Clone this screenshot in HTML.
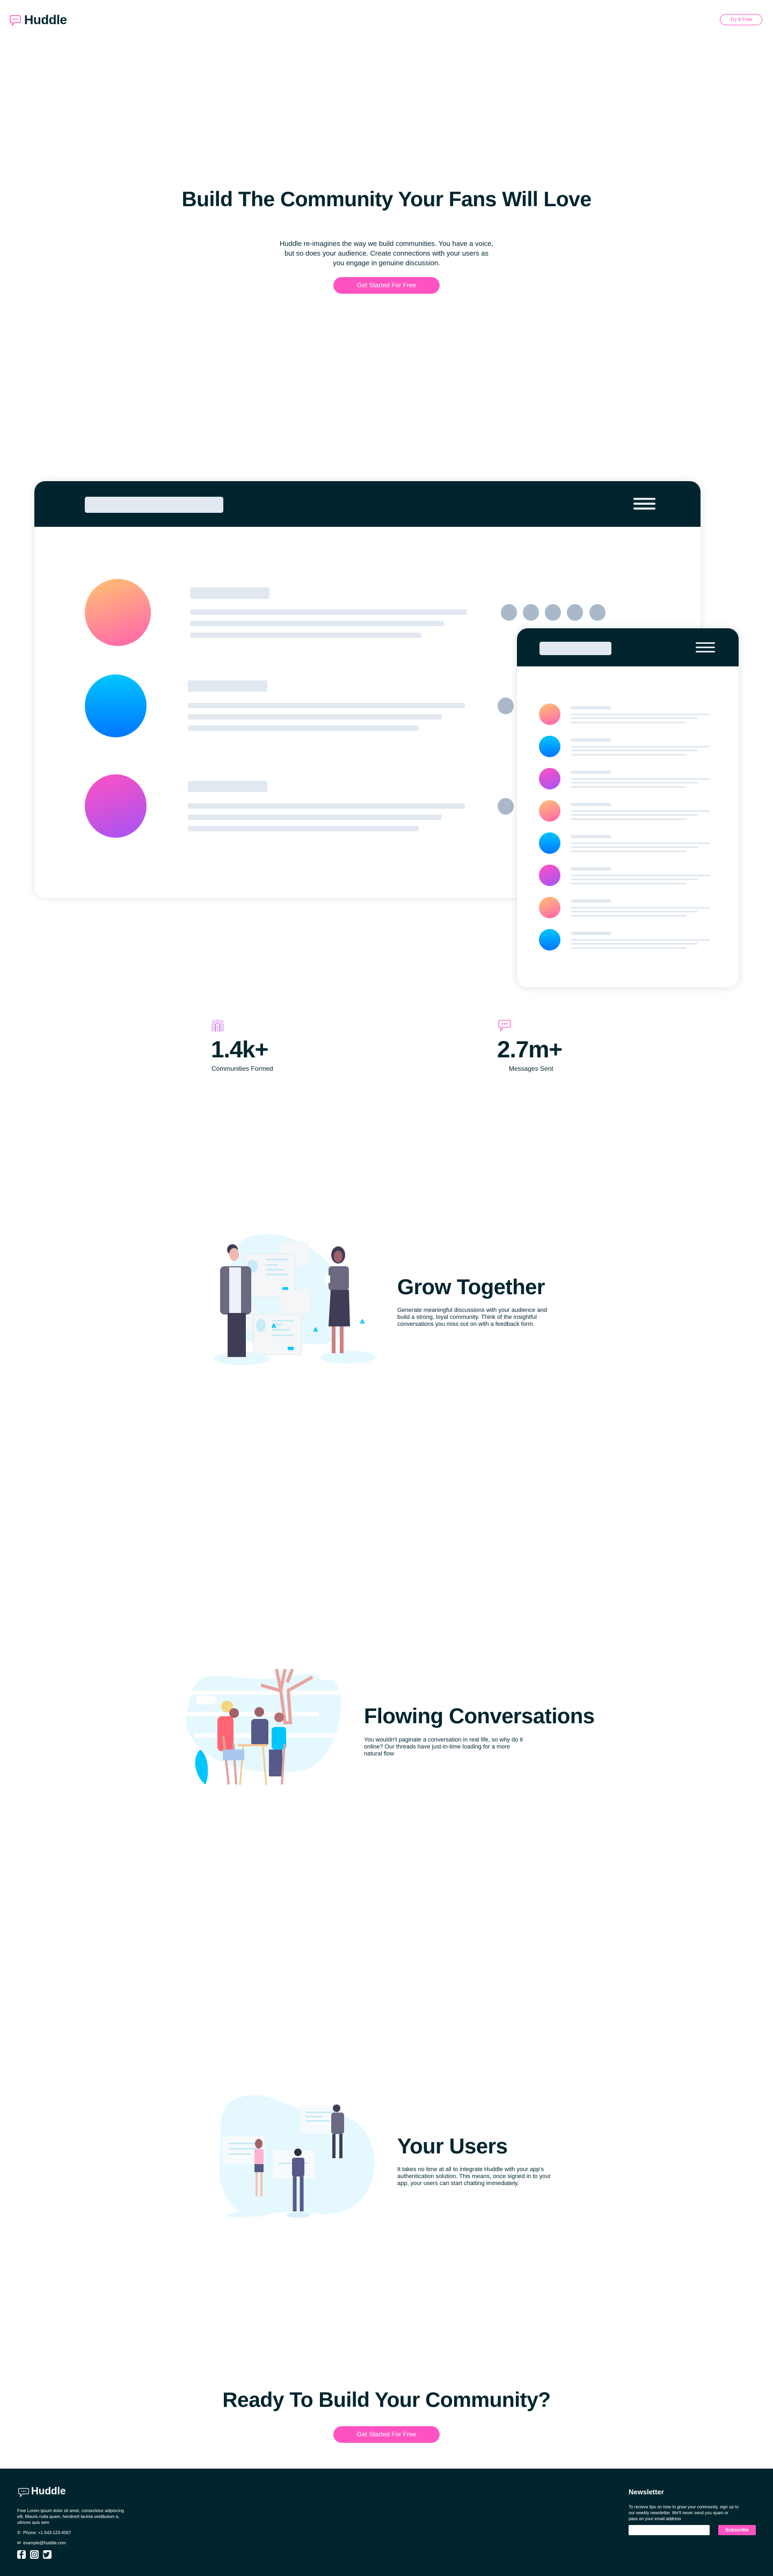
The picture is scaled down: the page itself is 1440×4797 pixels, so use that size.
<!DOCTYPE html>
<html><head><meta charset="utf-8">
<style>
*{margin:0;padding:0;box-sizing:border-box}
body{width:1440px;height:4797px;position:relative;background:#fff;font-family:"Liberation Sans",sans-serif;color:#00252e;overflow:hidden}
.a{position:absolute}
.h{font-weight:bold;color:#00252e;letter-spacing:-0.5px}
.btn{position:absolute;background:#ff52c1;color:#fff;border-radius:16px;font-size:12px;text-align:center}
.bar{position:absolute;background:#e1e8ef;border-radius:3px}
.dot{position:absolute;width:30px;height:31px;border-radius:50%;background:#a9b9c9}
.c1{background:linear-gradient(160deg,#ffc371,#ff70a6 85%)}
.c2{background:linear-gradient(180deg,#00c6ff,#0076ff)}
.c3{background:linear-gradient(160deg,#ff52c1,#a553f5)}
.p{font-size:11px;line-height:13px;color:#00252e}
</style></head><body>

<svg class="a" style="left:18px;top:27px" width="22" height="22" viewBox="0 0 22 22"><path d="M3 2h15a2 2 0 0 1 2 2v9a2 2 0 0 1-2 2H9l-4 5v-5H3a2 2 0 0 1-2-2V4a2 2 0 0 1 2-2z" fill="none" stroke="#ff52c1" stroke-width="1.5"/><circle cx="7" cy="8.5" r="1.2" fill="#ff52c1"/><circle cx="10.5" cy="8.5" r="1.2" fill="#ff52c1"/><circle cx="14" cy="8.5" r="1.2" fill="#ff52c1"/></svg>
<div class="a h" style="left:45px;top:24px;font-size:24px;letter-spacing:-0.3px">Huddle</div>
<div class="a" style="left:1341px;top:26px;width:79px;height:21px;border:1px solid #ff52c1;border-radius:11px;color:#ff52c1;font-size:9px;text-align:center;line-height:19px">Try It Free</div>

<div class="a h" style="left:0;width:1440px;top:350px;text-align:center;font-size:39px">Build The Community Your Fans Will Love</div>
<div class="a" style="left:520px;width:400px;top:445px;text-align:center;font-size:13px;line-height:18px">Huddle re-imagines the way we build communities. You have a voice, but so does your audience. Create connections with your users as you engage in genuine discussion.</div>
<div class="btn" style="left:621px;top:516px;width:198px;height:31px;line-height:31px">Get Started For Free</div>

<div class="a" style="left:64px;top:896px;width:1241px;height:776px;border-radius:20px;background:#fff;box-shadow:0 0 14px rgba(0,37,46,0.12);overflow:hidden">
  <div class="a" style="left:0;top:0;width:1241px;height:85px;background:#00252e"></div>
  <div class="bar" style="left:94px;top:29px;width:258px;height:30px;border-radius:4px"></div>
  <div class="bar" style="left:1116px;top:31px;width:41px;height:4px"></div>
  <div class="bar" style="left:1116px;top:40px;width:41px;height:4px"></div>
  <div class="bar" style="left:1116px;top:49px;width:41px;height:4px"></div>
</div>
<div class="a c1" style="left:158px;top:1078px;width:123px;height:125px;border-radius:50%"></div>
<div class="a c2" style="left:158px;top:1256px;width:115px;height:117px;border-radius:50%"></div>
<div class="a c3" style="left:158px;top:1442px;width:115px;height:118px;border-radius:50%"></div>
<div class="bar" style="left:354px;top:1094px;width:148px;height:21px"></div>
<div class="bar" style="left:354px;top:1135px;width:516px;height:10px"></div>
<div class="bar" style="left:354px;top:1156px;width:473px;height:10px"></div>
<div class="bar" style="left:354px;top:1178px;width:431px;height:10px"></div>
<div class="bar" style="left:350px;top:1267px;width:148px;height:21px"></div>
<div class="bar" style="left:350px;top:1309px;width:516px;height:10px"></div>
<div class="bar" style="left:350px;top:1330px;width:473px;height:10px"></div>
<div class="bar" style="left:350px;top:1351px;width:430px;height:10px"></div>
<div class="bar" style="left:350px;top:1454px;width:148px;height:21px"></div>
<div class="bar" style="left:350px;top:1496px;width:516px;height:10px"></div>
<div class="bar" style="left:350px;top:1517px;width:473px;height:10px"></div>
<div class="bar" style="left:350px;top:1538px;width:430px;height:10px"></div>
<div class="dot" style="left:933px;top:1125px"></div>
<div class="dot" style="left:974px;top:1125px"></div>
<div class="dot" style="left:1015px;top:1125px"></div>
<div class="dot" style="left:1056px;top:1125px"></div>
<div class="dot" style="left:1098px;top:1125px"></div>
<div class="dot" style="left:927px;top:1299px"></div>
<div class="dot" style="left:927px;top:1486px"></div>

<div class="a" style="left:963px;top:1170px;width:413px;height:669px;border-radius:20px;background:#fff;box-shadow:0 0 14px rgba(0,37,46,0.14);overflow:hidden">
  <div class="a" style="left:0;top:0;width:413px;height:71px;background:#00252e"></div>
  <div class="bar" style="left:42px;top:25px;width:134px;height:25px;border-radius:4px"></div>
  <div class="bar" style="left:333px;top:26px;width:36px;height:3px"></div>
  <div class="bar" style="left:333px;top:34px;width:36px;height:3px"></div>
  <div class="bar" style="left:333px;top:42px;width:36px;height:3px"></div>
</div>
<div class="a c1" style="left:1004px;top:1310px;width:40px;height:40px;border-radius:50%"></div>
<div class="a c2" style="left:1004px;top:1370px;width:40px;height:40px;border-radius:50%"></div>
<div class="a c3" style="left:1004px;top:1430px;width:40px;height:40px;border-radius:50%"></div>
<div class="a c1" style="left:1004px;top:1490px;width:40px;height:40px;border-radius:50%"></div>
<div class="a c2" style="left:1004px;top:1550px;width:40px;height:40px;border-radius:50%"></div>
<div class="a c3" style="left:1004px;top:1610px;width:40px;height:40px;border-radius:50%"></div>
<div class="a c1" style="left:1004px;top:1670px;width:40px;height:40px;border-radius:50%"></div>
<div class="a c2" style="left:1004px;top:1730px;width:40px;height:40px;border-radius:50%"></div>
<svg class="a" style="left:1064px;top:1300px" width="270" height="480">
<g fill="#e1e8ef">
<rect x="0" y="15" width="74" height="6"/><rect x="0" y="29" width="258" height="3"/><rect x="0" y="36" width="236" height="3"/><rect x="0" y="44" width="215" height="3"/>
<rect x="0" y="75" width="74" height="6"/><rect x="0" y="89" width="258" height="3"/><rect x="0" y="96" width="236" height="3"/><rect x="0" y="104" width="215" height="3"/>
<rect x="0" y="135" width="74" height="6"/><rect x="0" y="149" width="258" height="3"/><rect x="0" y="156" width="236" height="3"/><rect x="0" y="164" width="215" height="3"/>
<rect x="0" y="195" width="74" height="6"/><rect x="0" y="209" width="258" height="3"/><rect x="0" y="216" width="236" height="3"/><rect x="0" y="224" width="215" height="3"/>
<rect x="0" y="255" width="74" height="6"/><rect x="0" y="269" width="258" height="3"/><rect x="0" y="276" width="236" height="3"/><rect x="0" y="284" width="215" height="3"/>
<rect x="0" y="315" width="74" height="6"/><rect x="0" y="329" width="258" height="3"/><rect x="0" y="336" width="236" height="3"/><rect x="0" y="344" width="215" height="3"/>
<rect x="0" y="375" width="74" height="6"/><rect x="0" y="389" width="258" height="3"/><rect x="0" y="396" width="236" height="3"/><rect x="0" y="404" width="215" height="3"/>
<rect x="0" y="435" width="74" height="6"/><rect x="0" y="449" width="258" height="3"/><rect x="0" y="456" width="236" height="3"/><rect x="0" y="464" width="215" height="3"/>
</g></svg>

<svg class="a" style="left:394px;top:1899px" width="23" height="22" viewBox="0 0 23 22" fill="none" stroke="#c56ef0" stroke-width="1"><circle cx="4" cy="4" r="2.5"/><circle cx="11.5" cy="3" r="2.5"/><circle cx="19" cy="4" r="2.5"/><path d="M1 22V9h6v13M8 22V7h7v15M16 22V9h6v13M4 12v10M11.5 10v12M19 12v10"/></svg>
<div class="a h" style="left:393px;top:1930px;font-size:44px;letter-spacing:-1px">1.4k+</div>
<div class="a" style="left:394px;top:1983px;font-size:12px">Communities Formed</div>
<svg class="a" style="left:928px;top:1899px" width="24" height="22" viewBox="0 0 24 22"><path d="M3 1h18a2 2 0 0 1 2 2v9a2 2 0 0 1-2 2H9l-4 6v-6H3a2 2 0 0 1-2-2V3a2 2 0 0 1 2-2z" fill="none" stroke="#ff52c1" stroke-width="1.3"/><circle cx="8" cy="7.5" r="1.3" fill="#ff52c1"/><circle cx="12" cy="7.5" r="1.3" fill="#ff52c1"/><circle cx="16" cy="7.5" r="1.3" fill="#ff52c1"/></svg>
<div class="a h" style="left:926px;top:1930px;font-size:44px;letter-spacing:-1px">2.7m+</div>
<div class="a" style="left:948px;top:1983px;font-size:12px">Messages Sent</div>

<svg class="a" style="left:400px;top:2290px" width="300" height="255" viewBox="0 0 300 255">
<path d="M60 15C110-5 170 20 210 60s50 110 20 140-100 0-130 5-80 10-75-40S20 30 60 15z" fill="#e5f8fd"/>
<rect x="120" y="22" width="55" height="45" fill="#f4f6f8"/>
<rect x="56" y="45" width="93" height="80" fill="#f4f6f8" stroke="#e1e8ef"/><ellipse cx="70" cy="68" rx="10" ry="12" fill="#c7ebf7"/><rect x="95" y="54" width="42" height="3" fill="#c7ebf7"/><rect x="95" y="64" width="22" height="3" fill="#c7ebf7"/><rect x="95" y="73" width="35" height="3" fill="#c7ebf7"/><rect x="95" y="82" width="42" height="3" fill="#c7ebf7"/><rect x="126" y="107" width="11" height="6" fill="#00c6ff"/>
<rect x="122" y="112" width="56" height="45" fill="#f4f6f8"/>
<rect x="24" y="144" width="56" height="45" fill="#f4f6f8"/>
<rect x="72" y="157" width="90" height="76" fill="#f4f6f8" stroke="#e1e8ef"/><ellipse cx="86" cy="178" rx="9" ry="12" fill="#c7ebf7"/><rect x="107" y="168" width="40" height="3" fill="#c7ebf7"/><rect x="107" y="175" width="20" height="3" fill="#c7ebf7"/><rect x="107" y="185" width="33" height="3" fill="#c7ebf7"/><rect x="107" y="195" width="40" height="3" fill="#c7ebf7"/><rect x="136" y="218" width="11" height="6" fill="#00c6ff"/>
<ellipse cx="50" cy="240" rx="52" ry="12" fill="#e5f8fd"/><ellipse cx="248" cy="237" rx="52" ry="12" fill="#e5f8fd"/>
<circle cx="33" cy="37" r="10" fill="#3f3d56"/>
<rect x="10" y="68" width="58" height="90" rx="8" fill="#6b6a81"/><rect x="27" y="70" width="22" height="88" fill="#eef1f6"/>
<rect x="24" y="155" width="34" height="82" fill="#3f3d56"/>
<ellipse cx="36" cy="46" rx="9" ry="12" fill="#f2b8b0"/>
<ellipse cx="230" cy="47" rx="13" ry="16" fill="#3f3d56"/><ellipse cx="230" cy="50" rx="8" ry="11" fill="#a0616a"/>
<rect x="212" y="68" width="38" height="45" rx="6" fill="#6b6a81"/>
<path d="M216 112h34l2 68h-40z" fill="#3f3d56"/><rect x="218" y="180" width="7" height="50" fill="#d08080"/><rect x="233" y="180" width="7" height="50" fill="#d08080"/>
<rect x="205" y="85" width="10" height="14" fill="#fff"/>
<path d="M107 183l3-6 3 6M185 190l3-6 3 6M272 175l3-6 3 6" stroke="#00c6ff" stroke-width="3" fill="none"/>
</svg>
<div class="a h" style="left:740px;top:2375px;font-size:40px">Grow Together</div>
<div class="a p" style="left:740px;top:2434px;width:305px">Generate meaningful discussions with your audience and build a strong, loyal community. Think of the insightful conversations you miss out on with a feedback form.</div>

<svg class="a" style="left:343px;top:3108px" width="295" height="218" viewBox="0 0 295 218">
<path d="M40 15c40-10 80 12 140 0s110-8 112 40-15 100-50 125-140 10-180-10S-5 110 5 80 10 25 40 15z" fill="#e5f8fd"/>
<rect x="10" y="40" width="280" height="8" fill="#fff"/><rect x="0" y="80" width="250" height="8" fill="#fff"/><rect x="20" y="120" width="270" height="8" fill="#fff"/>
<rect x="22" y="50" width="38" height="16" rx="7" fill="#fff"/><rect x="250" y="5" width="30" height="15" rx="7" fill="#fff"/>
<path d="M172 0l8 40 8-40M180 40l8 60h10l-4-60 45-25M178 40l-35-10M192 25l10-25" stroke="#e8a4a0" stroke-width="6" fill="none"/>
<path d="M30 150c15 10 18 45 10 65-14-8-30-45-10-65z" fill="#00c6ff"/>
<circle cx="80" cy="70" r="11" fill="#f5d580"/><rect x="62" y="88" width="30" height="65" rx="8" fill="#ff6574"/>
<circle cx="93" cy="82" r="9" fill="#a0616a"/>
<circle cx="140" cy="80" r="9" fill="#a0616a"/><rect x="125" y="93" width="32" height="50" rx="6" fill="#575a89"/>
<circle cx="177" cy="90" r="9" fill="#b07070"/><rect x="163" y="108" width="27" height="42" rx="6" fill="#00c6ff"/><rect x="158" y="150" width="25" height="50" fill="#575a89"/>
<rect x="100" y="140" width="55" height="4" fill="#f7c891"/><path d="M110 144l-6 72M147 144l6 72" stroke="#f7c891" stroke-width="3"/>
<path d="M73 125l10 90M92 140l5 75M187 140l-5 75" stroke="#dba3a0" stroke-width="4"/>
<rect x="72" y="150" width="40" height="20" fill="#a8c8ee"/>
</svg>
<div class="a h" style="left:678px;top:3174px;font-size:40px">Flowing Conversations</div>
<div class="a p" style="left:678px;top:3234px;width:300px">You wouldn't paginate a conversation in real life, so why do it online? Our threads have just-in-time loading for a more natural flow</div>

<svg class="a" style="left:399px;top:3900px" width="302" height="232" viewBox="0 0 302 232">
<path d="M50 5c50-15 80 20 130 25s100 10 115 70-20 110-60 120-100-10-140 5S5 200 10 130 0 20 50 5z" fill="#e5f8fd"/>
<rect x="16" y="78" width="78" height="52" rx="3" fill="#f7fafc"/><rect x="27" y="90" width="55" height="3" fill="#c7ebf7"/><rect x="27" y="100" width="55" height="3" fill="#c7ebf7"/><rect x="27" y="110" width="40" height="3" fill="#c7ebf7"/>
<rect x="161" y="20" width="74" height="52" rx="3" fill="#f7fafc"/><rect x="170" y="32" width="52" height="3" fill="#c7ebf7"/><rect x="170" y="40" width="32" height="3" fill="#c7ebf7"/><rect x="170" y="48" width="45" height="3" fill="#c7ebf7"/>
<rect x="110" y="105" width="78" height="52" rx="3" fill="#f7fafc"/><rect x="120" y="127" width="55" height="3" fill="#c7ebf7"/>
<ellipse cx="83" cy="92" rx="7" ry="9" fill="#a0616a"/><rect x="75" y="102" width="17" height="30" fill="#ffb3d1"/><rect x="75" y="130" width="17" height="15" fill="#575a89"/><path d="M79 145v45M88 145v45" stroke="#f4c2b0" stroke-width="4"/>
<circle cx="228" cy="26" r="7" fill="#3f3d56"/><rect x="218" y="34" width="24" height="40" rx="5" fill="#6b6a81"/><path d="M223 74v45M236 74v45" stroke="#3f3d56" stroke-width="6"/>
<circle cx="156" cy="108" r="7" fill="#2f2e41"/><rect x="145" y="118" width="23" height="35" rx="4" fill="#575a89"/><path d="M150 153v65M163 153v65" stroke="#575a89" stroke-width="7"/>
<ellipse cx="45" cy="225" rx="20" ry="5" fill="#e5f8fd"/><ellipse cx="157" cy="225" rx="22" ry="5" fill="#d7f1fb"/>
</svg>
<div class="a h" style="left:740px;top:3975px;font-size:40px">Your Users</div>
<div class="a p" style="left:740px;top:4034px;width:300px">It takes no time at all to integrate Huddle with your app's authentication solution. This means, once signed in to your app, your users can start chatting immediately.</div>

<div class="a h" style="left:0;width:1440px;top:4448px;text-align:center;font-size:39px">Ready To Build Your Community?</div>
<div class="btn" style="left:621px;top:4518px;width:198px;height:31px;line-height:31px">Get Started For Free</div>

<div class="a" style="left:0;top:4597px;width:1440px;height:200px;background:#00252e;color:#fff">
  <svg class="a" style="left:34px;top:36px" width="20" height="17" viewBox="0 0 20 17"><path d="M2 1h16a1.5 1.5 0 0 1 1.5 1.5v7A1.5 1.5 0 0 1 18 11H8l-4 5v-5H2A1.5 1.5 0 0 1 .5 9.5v-7A1.5 1.5 0 0 1 2 1z" fill="none" stroke="#fff" stroke-width="1.2"/><circle cx="6.5" cy="6" r="1" fill="#fff"/><circle cx="10" cy="6" r="1" fill="#fff"/><circle cx="13.5" cy="6" r="1" fill="#fff"/></svg>
  <div class="a" style="left:58px;top:32px;font-size:19px;font-weight:bold">Huddle</div>
  <div class="a" style="left:32px;top:73px;width:200px;font-size:8px;line-height:11px">Free Lorem ipsum dolor sit amet, consectetur adipiscing elit. Mauris nulla quam, hendrerit lacinia vestibulum a, ultrices quis sem</div>
  <div class="a" style="left:32px;top:115px;font-size:8px">✆ &nbsp;Phone: +1-543-123-4567</div>
  <div class="a" style="left:32px;top:134px;font-size:8px">✉ &nbsp;example@huddle.com</div>
  <svg class="a" style="left:32px;top:152px" width="65" height="16" viewBox="0 0 65 16"><rect x="0" y="0" width="16" height="16" rx="3" fill="#fff"/><path d="M9 16V9h2.3l.4-2.6H9V5c0-.8.3-1.3 1.3-1.3h1.4V1.4C11.4 1.3 10.6 1.2 9.8 1.2 7.9 1.2 6.5 2.4 6.5 4.6v1.8H4.3V9h2.2v7z" fill="#00252e"/><rect x="24" y="0" width="16" height="16" rx="3" fill="#fff"/><rect x="26.5" y="2.5" width="11" height="11" rx="3" fill="none" stroke="#00252e" stroke-width="1.3"/><circle cx="32" cy="8" r="2.6" fill="none" stroke="#00252e" stroke-width="1.3"/><rect x="48" y="0" width="16" height="16" rx="3" fill="#fff"/><path d="M61 4.5c-.5.2-1 .4-1.5.4.6-.3 1-.9 1.2-1.5-.5.3-1.1.5-1.7.7a2.6 2.6 0 0 0-4.5 2.4c-2.2-.1-4.1-1.2-5.4-2.8-.7 1.2-.3 2.700.8 3.5-.4 0-.8-.1-1.2-.3 0 1.3.9 2.4 2.1 2.6-.4.1-.8.1-1.2 0 .3 1 1.3 1.8 2.4 1.8-1.1.9-2.5 1.3-3.9 1.1 1.2.7 2.5 1.1 3.9 1.1 4.8 0 7.4-4 7.3-7.6.5-.4.9-.8 1.2-1.3z" fill="#00252e"/></svg>
  <div class="a" style="left:1171px;top:36px;font-size:13px;font-weight:bold">Newsletter</div>
  <div class="a" style="left:1171px;top:66px;width:205px;font-size:8px;line-height:11px">To recieve tips on how to grow your community, sign up to our weekly newsletter. We'll never send you spam or pass on your email address</div>
  <div class="a" style="left:1171px;top:105px;width:151px;height:19px;background:#fff;border-radius:2px"></div>
  <div class="a" style="left:1338px;top:105px;width:70px;height:19px;background:#ff52c1;border-radius:2px;font-size:9px;font-weight:bold;text-align:center;line-height:19px">Subscribe</div>
</div>
</body></html>
